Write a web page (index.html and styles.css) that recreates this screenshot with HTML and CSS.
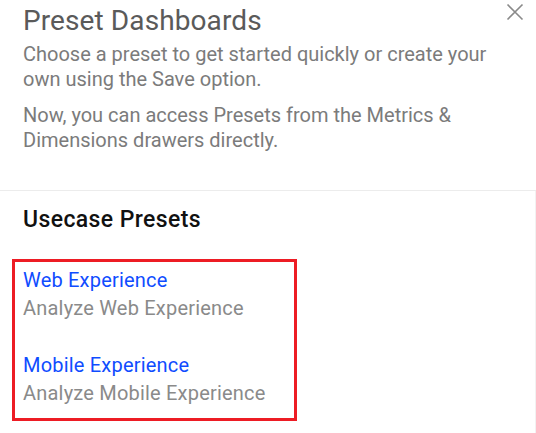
FILE: index.html
```html
<!DOCTYPE html>
<html lang="en">
<head>
    <meta charset="UTF-8">
    <meta name="viewport" content="width=device-width, initial-scale=1.0">
    <title>Preset Dashboards</title>
    <link rel="stylesheet" href="styles.css">
</head>
<body>

    <div class="panel">
        <!-- Header with intro text -->
        <div class="panel-header">
            <h1>Preset Dashboards</h1>
            <p>Choose a preset to get started quickly or create your own using the Save option.</p>
            <p>Now, you can access Presets from the Metrics &amp; Dimensions drawers directly.</p>
            <button class="close-btn" aria-label="Close">
                <svg width="18" height="18" viewBox="0 0 18 18">
                    <path d="M1.5 1.5 L16.5 16.5 M16.5 1.5 L1.5 16.5" stroke="#8a8a8a" stroke-width="1.6" fill="none"/>
                </svg>
            </button>
        </div>

        <!-- Preset list -->
        <div class="panel-body">
            <h2>Usecase Presets</h2>
            <div class="preset-group">
                <div class="preset">
                    <a href="#" class="preset-name">Web Experience</a>
                    <div class="preset-desc">Analyze Web Experience</div>
                </div>
                <div class="preset">
                    <a href="#" class="preset-name">Mobile Experience</a>
                    <div class="preset-desc">Analyze Mobile Experience</div>
                </div>
            </div>
        </div>
    </div>

</body>
</html>
```

FILE: styles.css
```css
body {
    margin: 0;
    font-family: Roboto, "Liberation Sans", Arial, sans-serif;
    background-color: white;
}

.panel {
    width: 536px;
}

.panel-header {
    position: relative;
    padding: 3px 40px 26px 23px;
    border-bottom: 1px solid #ececec;
}

h1 {
    font-size: 28px;
    font-weight: 400;
    letter-spacing: 0.1px;
    color: #5a5a5a;
    margin: 0 0 3px 0;
    line-height: 36px;
}

.panel-header p {
    font-size: 20px;
    color: #7b7b7b;
    line-height: 25px;
    margin: 0 0 11px 0;
}

.close-btn {
    position: absolute;
    top: 3px;
    right: 12px;
    background: none;
    border: none;
    padding: 0;
    cursor: pointer;
}

.panel-body {
    padding: 14px 23px 0 12px;
    border-right: 1px solid #f2f2f2;
    height: 240px;
}

h2 {
    font-size: 23px;
    font-weight: 500;
    letter-spacing: 0.4px;
    color: #111;
    margin: 0 0 24px 11px;
    line-height: 30px;
}

.preset-group {
    width: 271px;
    border: 3px solid #ed1c24;
    padding: 4px 0 11px 8px;
}

.preset {
    margin-bottom: 29px;
}

.preset:last-child {
    margin-bottom: 0;
}

.preset-name {
    display: block;
    font-size: 20px;
    letter-spacing: 0.2px;
    color: #0f4cff;
    text-decoration: none;
    line-height: 28px;
}

.preset-desc {
    font-size: 20px;
    letter-spacing: 0.2px;
    color: #8a8a8a;
    line-height: 28px;
}
```
